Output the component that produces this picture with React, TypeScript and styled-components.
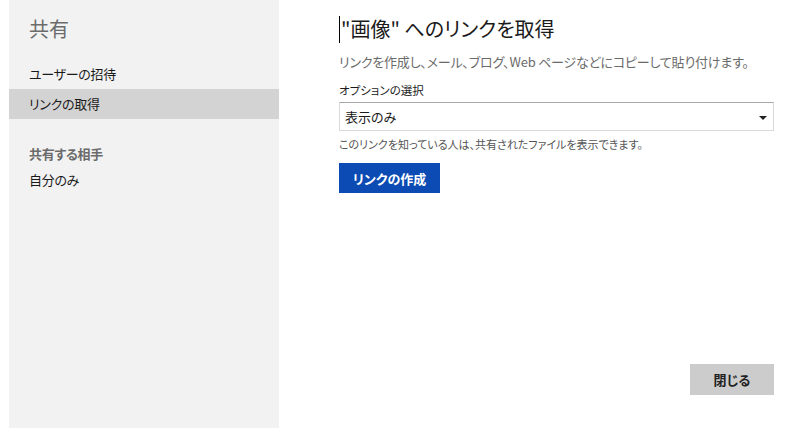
import React from "react";
import styled, { createGlobalStyle } from "styled-components";

const Global = createGlobalStyle`
  html, body { margin: 0; padding: 0; background: #ffffff; }
  body {
    font-family: "Noto Sans CJK JP", "Noto Sans", sans-serif;
    color: #222;
    font-feature-settings: "palt" 1;
  }
  button { font-feature-settings: "palt" 1; }
`;

const Page = styled.div`
  display: flex;
  width: 807px;
  height: 428px;
  overflow: hidden;
`;

const Sidebar = styled.nav`
  width: 270px;
  margin-left: 9px;
  background: #f2f2f2;
  display: flex;
  flex-direction: column;
  padding-top: 14px;
  box-sizing: border-box;
`;

const SideTitle = styled.div`
  font-size: 20px;
  line-height: 30px;
  color: #6b6b6b;
  padding-left: 20px;
  margin-bottom: 15px;
`;

const SideItem = styled.div<{ $active?: boolean }>`
  height: 30px;
  line-height: 30px;
  font-size: 13px;
  letter-spacing: -0.3px;
  color: #1a1a1a;
  padding-left: 20px;
  background: ${(p) => (p.$active ? "#d3d3d3" : "transparent")};
`;

const SideGroup = styled.div`
  margin-top: 22px;
  font-size: 13px;
  font-weight: bold;
  letter-spacing: -0.3px;
  color: #6b6b6b;
  padding-left: 20px;
  line-height: 26px;
`;

const SideSub = styled.div`
  font-size: 13px;
  letter-spacing: -0.3px;
  color: #1a1a1a;
  padding-left: 20px;
  line-height: 26px;
`;

const Main = styled.main`
  flex: 1;
  display: flex;
  flex-direction: column;
  padding: 14px 33px 33px 60px;
  box-sizing: border-box;
  white-space: nowrap;
`;

const Title = styled.h1`
  margin: 0;
  font-size: 20px;
  font-weight: normal;
  line-height: 30px;
  color: #1a1a1a;
  display: flex;
  align-items: center;
`;

const Caret = styled.span`
  display: inline-block;
  width: 1px;
  height: 27px;
  background: #000;
  margin-right: 1px;
`;

const Subtitle = styled.p`
  margin: 6px 0 0;
  font-size: 13px;
  line-height: 24px;
  letter-spacing: -0.2px;
  color: #6b6b6b;
`;

const Label = styled.div`
  margin-top: 6px;
  font-size: 11.5px;
  line-height: 20px;
  color: #1a1a1a;
`;

const SelectBox = styled.div`
  margin-top: 2px;
  height: 29px;
  box-sizing: border-box;
  border: 1px solid #dadada;
  border-top-color: #a8a8a8;
  display: flex;
  align-items: center;
  justify-content: space-between;
  padding: 0 5px 0 5px;
  font-size: 13px;
  color: #1a1a1a;
`;

const Arrow = styled.span`
  width: 0;
  height: 0;
  border-left: 4px solid transparent;
  border-right: 4px solid transparent;
  border-top: 4px solid #222;
  margin-right: 1px;
  margin-top: 2px;
`;

const Helper = styled.div`
  margin-top: 3px;
  font-size: 11px;
  line-height: 20px;
  color: #555;
`;

const PrimaryButton = styled.button`
  margin-top: 9px;
  align-self: flex-start;
  width: 101px;
  height: 30px;
  border: none;
  background: #0b4bb3;
  color: #fff;
  font-family: inherit;
  font-size: 13px;
  font-weight: bold;
  padding: 0;
`;

const CloseButton = styled.button`
  margin-top: auto;
  align-self: flex-end;
  width: 84px;
  height: 31px;
  border: none;
  background: #cccccc;
  color: #222;
  font-family: inherit;
  font-size: 13px;
  font-weight: bold;
  padding: 0;
`;

export default function App() {
  return (
    <>
      <Global />
      <Page>
        <Sidebar>
          <SideTitle>共有</SideTitle>
          <SideItem>ユーザーの招待</SideItem>
          <SideItem $active>リンクの取得</SideItem>
          <SideGroup>共有する相手</SideGroup>
          <SideSub>自分のみ</SideSub>
        </Sidebar>
        <Main>
          <Title>
            <Caret />
            "画像" へのリンクを取得
          </Title>
          <Subtitle>リンクを作成し、メール、ブログ、Web ページなどにコピーして貼り付けます。</Subtitle>
          <Label>オプションの選択</Label>
          <SelectBox>
            <span>表示のみ</span>
            <Arrow />
          </SelectBox>
          <Helper>このリンクを知っている人は、共有されたファイルを表示できます。</Helper>
          <PrimaryButton>リンクの作成</PrimaryButton>
          <CloseButton>閉じる</CloseButton>
        </Main>
      </Page>
    </>
  );
}
